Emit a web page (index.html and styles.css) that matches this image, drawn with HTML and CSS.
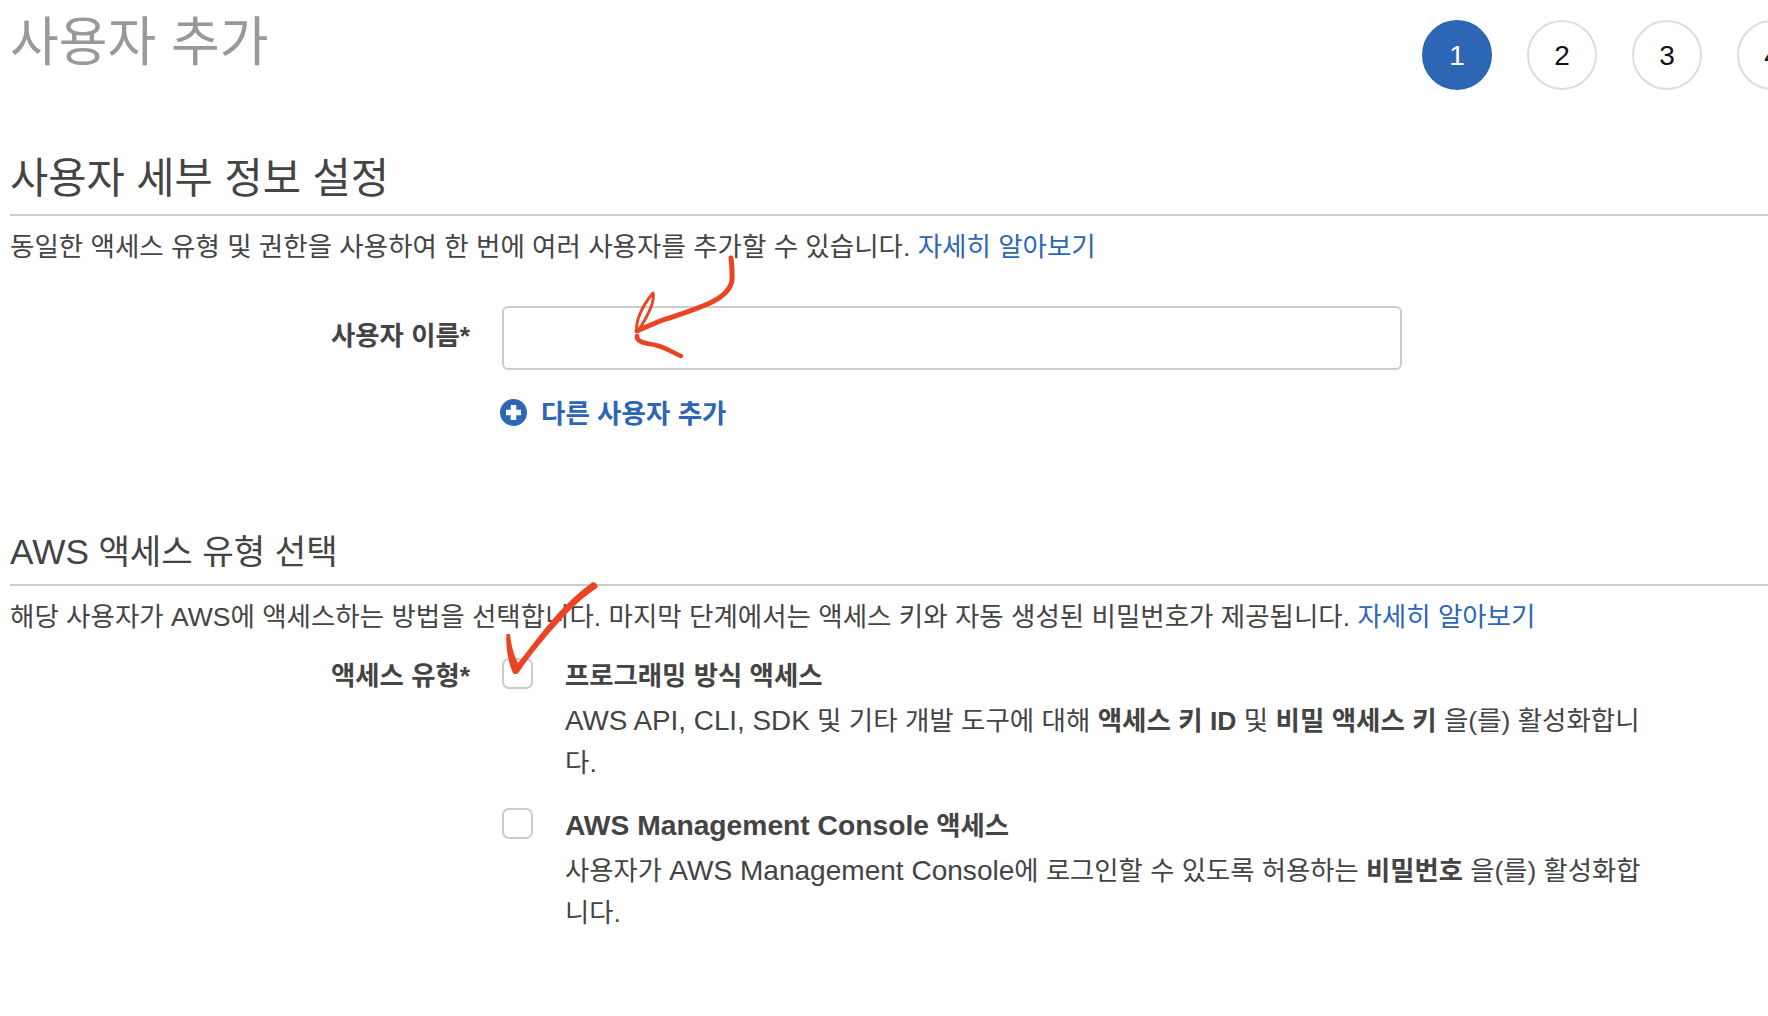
FILE: index.html
```html
<!DOCTYPE html>
<html lang="ko">
<head>
<meta charset="utf-8">
<title>사용자 추가</title>
<link rel="stylesheet" href="styles.css">
</head>
<body>
<main class="page">
  <header class="top">
    <h1 class="title">사용자 추가</h1>
    <ol class="steps">
      <li class="step step-active">1</li>
      <li class="step">2</li>
      <li class="step">3</li>
      <li class="step">4</li>
    </ol>
  </header>

  <section>
    <h2 class="section-title section-title-first">사용자 세부 정보 설정</h2>
    <p class="intro intro-first">동일한 액세스 유형 및 권한을 사용하여 한 번에 여러 사용자를 추가할 수 있습니다. <a class="link" href="#">자세히 알아보기</a></p>
    <div class="field-row">
      <label class="field-label field-label-input" for="username">사용자 이름*</label>
      <input class="text-input" id="username" type="text">
    </div>
    <div class="add-row">
      <a class="add-user" href="#">
        <svg class="add-icon" viewBox="0 0 27 27" aria-hidden="true"><circle cx="13.5" cy="13.5" r="13.5" fill="#2d66b5"/><path d="M13.5 6v15M6 13.5h15" stroke="#fff" stroke-width="5.5" fill="none"/></svg>
        <span class="add-text">다른 사용자 추가</span>
      </a>
    </div>
  </section>

  <section>
    <h2 class="section-title section-title-second"><span class="latin-h">AWS</span> 액세스 유형 선택</h2>
    <p class="intro intro-second">해당 사용자가 AWS에 액세스하는 방법을 선택합니다. 마지막 단계에서는 액세스 키와 자동 생성된 비밀번호가 제공됩니다. <a class="link" href="#">자세히 알아보기</a></p>
    <div class="field-row access-row">
      <div class="field-label field-label-option">액세스 유형*</div>
      <div class="options">
        <div class="option">
          <span class="checkbox"></span>
          <div class="option-body">
            <div class="option-title">프로그래밍 방식 액세스</div>
            <p class="option-desc option-desc-first"><span class="latin-short">AWS API, CLI, SDK</span> 및 기타 개발 도구에 대해 <b>액세스 키 ID</b> 및 <b>비밀 액세스 키</b> 을(를) 활성화합니<br>다.</p>
          </div>
        </div>
        <div class="option">
          <span class="checkbox"></span>
          <div class="option-body">
            <div class="option-title"><span class="latin-title">AWS Management Console</span> 액세스</div>
            <p class="option-desc"><span>사용자가</span> <span class="latin">AWS Management Console</span>에 로그인할 수 있도록 허용하는 <b>비밀번호</b> 을(를) 활성화합<br>니다.</p>
          </div>
        </div>
      </div>
    </div>
  </section>

  <svg class="annotations" viewBox="0 0 1768 1016" aria-hidden="true">
    <path class="ink ink-shaft" d="M731 258 C732 268 733 276 731.5 283 C729 291 722 297 712 302 C695 310 678 315 660 321 C651 325 643 328 637 331"/>
    <path class="ink ink-loop" d="M637 331 C635 322 642 306 653 293 C655 300 650 312 640 328"/>
    <path class="ink ink-barb" d="M637 336 C636 342 645 343 655 345 C665 347 672 352 681 356"/>
    <path class="ink-fill" d="M506.5 634 C505.5 645 507.5 660 512.5 672 C514 675 517.5 674.5 519 672 C530 656 545 637 560 621 C572 607 584 597 597.5 587.5 C598 584 594.5 581.5 592 582.5 C578 593 566 604 553 619 C541 633 529 649 518 663 C514 655 511 645 510 634 Z"/>
  </svg>
</main>
</body>
</html>
```
FILE: styles.css
```css
* { box-sizing: border-box; }
html, body { margin: 0; padding: 0; background: #fff; }
body {
  font-family: "Liberation Sans", "Noto Sans CJK KR", sans-serif;
  color: #444;
}
.page {
  position: relative;
  width: 1768px;
  height: 1016px;
  padding-left: 10px;
  overflow: hidden;
}
.top {
  display: grid;
  grid-template-columns: 1412px 400px;
  height: 147px;
}
.title {
  margin: 10px 0 0;
  font-size: 53px;
  line-height: 66px;
  font-weight: 400;
  color: #999;
}
.steps {
  display: flex;
  gap: 35px;
  margin: 20px 0 0;
  padding: 0;
  list-style: none;
}
.step {
  flex: none;
  width: 70px;
  height: 70px;
  display: flex;
  align-items: center;
  justify-content: center;
  padding-top: 2px;
  border: 2px solid #ddd;
  border-radius: 50%;
  font-size: 28px;
  color: #111;
}
.step-active {
  background: #2d66b5;
  border-color: #2d66b5;
  color: #fff;
}
.section-title {
  margin: 0;
  font-weight: 400;
  border-bottom: 2px solid #ccc;
}
.section-title-first {
  padding: 2px 0 5px;
  font-size: 41.6px;
  line-height: 60px;
}
.section-title-second {
  margin-top: 99px;
  padding: 2px 0 7px;
  font-size: 34.2px;
  line-height: 50px;
}
.latin-h { font-size: 1.03em; line-height: 1; }
.latin { font-size: 1.065em; line-height: 1; }
.latin-short { font-size: 1.05em; line-height: 1; }
.latin-title { font-size: 1.07em; line-height: 1; }
.intro {
  margin: 11px 0 0;
  font-size: 26.5px;
  line-height: 40px;
  white-space: nowrap;
}
.link { color: #2d66b5; text-decoration: none; }
.field-row {
  display: grid;
  grid-template-columns: 460px 1fr;
  column-gap: 32px;
  margin-top: 39px;
}
.access-row { margin-top: 21px; }
.field-label {
  font-size: 26.4px;
  line-height: 34px;
  font-weight: 700;
  text-align: right;
}
.field-label-input { margin-top: 13px; }
.field-label-option { padding-top: 1px; }
.text-input {
  display: block;
  width: 900px;
  height: 64px;
  border: 2px solid #ccc;
  border-radius: 6px;
  background: #fff;
}
.add-row {
  margin: 29px 0 0 490px;
  height: 27px;
}
.add-user {
  display: flex;
  align-items: center;
  gap: 14px;
  height: 27px;
  font-size: 26.5px;
  line-height: 27px;
  font-weight: 700;
  color: #2d66b5;
  text-decoration: none;
}
.add-text { padding-top: 4px; }
.add-icon { width: 27px; height: 27px; flex: none; }
.options { display: grid; row-gap: 24px; }
.option {
  display: grid;
  grid-template-columns: 31px 1fr;
  column-gap: 32px;
}
.option-body { padding-top: 1px; }
.checkbox {
  display: block;
  width: 31px;
  height: 31px;
  border: 2px solid #ccc;
  border-radius: 7px;
  background: #fff;
}
.option-title {
  height: 34px;
  font-size: 26.4px;
  line-height: 34px;
  font-weight: 700;
  white-space: nowrap;
}
.option-desc {
  margin: 7px 0 0;
  font-size: 26.35px;
  line-height: 42px;
  white-space: nowrap;
}
.option-desc-first { font-size: 26.5px; }
.annotations {
  position: absolute;
  left: 0;
  top: 0;
  width: 1768px;
  height: 1016px;
  pointer-events: none;
}
.ink {
  fill: none;
  stroke: #ea4425;
  stroke-linecap: round;
  stroke-linejoin: round;
}
.ink-shaft { stroke-width: 5; }
.ink-loop { stroke-width: 3; }
.ink-barb { stroke-width: 4.5; }
.ink-fill { fill: #ea4425; }
```
